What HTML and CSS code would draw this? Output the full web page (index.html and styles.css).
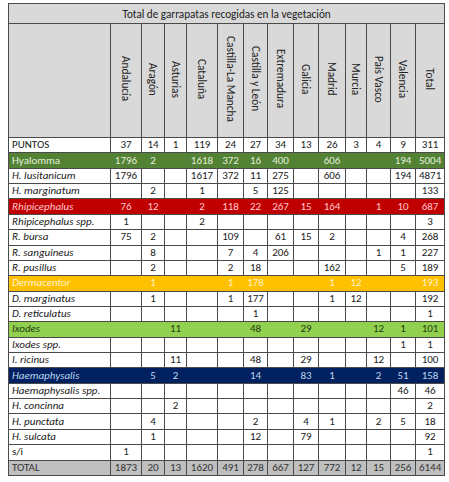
FILE: index.html
```html
<!DOCTYPE html>
<html lang="es">
<head>
<meta charset="utf-8">
<title>Total de garrapatas recogidas en la vegetación</title>
<link rel="stylesheet" href="styles.css">
</head>
<body>
<table class="ticks">
  <colgroup>
    <col class="c-label"><col class="c-and"><col class="c-ara"><col class="c-ast"><col class="c-cat"><col class="c-clm"><col class="c-cyl"><col class="c-ext"><col class="c-gal"><col class="c-mad"><col class="c-mur"><col class="c-pv"><col class="c-val"><col class="c-tot">
  </colgroup>
  <thead>
    <tr class="title-row"><th colspan="14">Total de garrapatas recogidas en la vegetación</th></tr>
    <tr class="head-row">
      <th></th>
      <th><span class="vt">Andalucía</span></th>
      <th><span class="vt">Aragón</span></th>
      <th><span class="vt">Asturias</span></th>
      <th><span class="vt">Cataluña</span></th>
      <th><span class="vt">Castilla-La Mancha</span></th>
      <th><span class="vt">Castilla y León</span></th>
      <th><span class="vt">Extremadura</span></th>
      <th><span class="vt">Galicia</span></th>
      <th><span class="vt">Madrid</span></th>
      <th><span class="vt">Murcia</span></th>
      <th><span class="vt">País Vasco</span></th>
      <th><span class="vt">Valencia</span></th>
      <th><span class="vt">Total</span></th>
    </tr>
  </thead>
  <tbody>
    <tr><td class="lbl">PUNTOS</td><td>37</td><td>14</td><td>1</td><td>119</td><td>24</td><td>27</td><td>34</td><td>13</td><td>26</td><td>3</td><td>4</td><td>9</td><td>311</td></tr>
    <tr class="g-hyal"><td class="lbl">Hyalomma</td><td>1796</td><td>2</td><td></td><td>1618</td><td>372</td><td>16</td><td>400</td><td></td><td>606</td><td></td><td></td><td>194</td><td>5004</td></tr>
    <tr><td class="lbl sp">H. lusitanicum</td><td>1796</td><td></td><td></td><td>1617</td><td>372</td><td>11</td><td>275</td><td></td><td>606</td><td></td><td></td><td>194</td><td>4871</td></tr>
    <tr><td class="lbl sp">H. marginatum</td><td></td><td>2</td><td></td><td>1</td><td></td><td>5</td><td>125</td><td></td><td></td><td></td><td></td><td></td><td>133</td></tr>
    <tr class="g-rhip"><td class="lbl sp">Rhipicephalus</td><td>76</td><td>12</td><td></td><td>2</td><td>118</td><td>22</td><td>267</td><td>15</td><td>164</td><td></td><td>1</td><td>10</td><td>687</td></tr>
    <tr><td class="lbl sp">Rhipicephalus spp.</td><td>1</td><td></td><td></td><td>2</td><td></td><td></td><td></td><td></td><td></td><td></td><td></td><td></td><td>3</td></tr>
    <tr><td class="lbl sp">R. bursa</td><td>75</td><td>2</td><td></td><td></td><td>109</td><td></td><td>61</td><td>15</td><td>2</td><td></td><td></td><td>4</td><td>268</td></tr>
    <tr><td class="lbl sp">R. sanguineus</td><td></td><td>8</td><td></td><td></td><td>7</td><td>4</td><td>206</td><td></td><td></td><td></td><td>1</td><td>1</td><td>227</td></tr>
    <tr><td class="lbl sp">R. pusillus</td><td></td><td>2</td><td></td><td></td><td>2</td><td>18</td><td></td><td></td><td>162</td><td></td><td></td><td>5</td><td>189</td></tr>
    <tr class="g-derm"><td class="lbl sp">Dermacentor</td><td></td><td>1</td><td></td><td></td><td>1</td><td>178</td><td></td><td></td><td>1</td><td>12</td><td></td><td></td><td>193</td></tr>
    <tr><td class="lbl sp">D. marginatus</td><td></td><td>1</td><td></td><td></td><td>1</td><td>177</td><td></td><td></td><td>1</td><td>12</td><td></td><td></td><td>192</td></tr>
    <tr><td class="lbl sp">D. reticulatus</td><td></td><td></td><td></td><td></td><td></td><td>1</td><td></td><td></td><td></td><td></td><td></td><td></td><td>1</td></tr>
    <tr class="g-ixod"><td class="lbl sp">Ixodes</td><td></td><td></td><td>11</td><td></td><td></td><td>48</td><td></td><td>29</td><td></td><td></td><td>12</td><td>1</td><td>101</td></tr>
    <tr><td class="lbl sp">Ixodes spp.</td><td></td><td></td><td></td><td></td><td></td><td></td><td></td><td></td><td></td><td></td><td></td><td>1</td><td>1</td></tr>
    <tr><td class="lbl sp">I. ricinus</td><td></td><td></td><td>11</td><td></td><td></td><td>48</td><td></td><td>29</td><td></td><td></td><td>12</td><td></td><td>100</td></tr>
    <tr class="g-haem"><td class="lbl sp">Haemaphysalis</td><td></td><td>5</td><td>2</td><td></td><td></td><td>14</td><td></td><td>83</td><td>1</td><td></td><td>2</td><td>51</td><td>158</td></tr>
    <tr><td class="lbl sp">Haemaphysalis spp.</td><td></td><td></td><td></td><td></td><td></td><td></td><td></td><td></td><td></td><td></td><td></td><td>46</td><td>46</td></tr>
    <tr><td class="lbl sp">H. concinna</td><td></td><td></td><td>2</td><td></td><td></td><td></td><td></td><td></td><td></td><td></td><td></td><td></td><td>2</td></tr>
    <tr><td class="lbl sp">H. punctata</td><td></td><td>4</td><td></td><td></td><td></td><td>2</td><td></td><td>4</td><td>1</td><td></td><td>2</td><td>5</td><td>18</td></tr>
    <tr><td class="lbl sp">H. sulcata</td><td></td><td>1</td><td></td><td></td><td></td><td>12</td><td></td><td>79</td><td></td><td></td><td></td><td></td><td>92</td></tr>
    <tr><td class="lbl">s/i</td><td>1</td><td></td><td></td><td></td><td></td><td></td><td></td><td></td><td></td><td></td><td></td><td></td><td>1</td></tr>
    <tr class="total-row"><td class="lbl">TOTAL</td><td>1873</td><td>20</td><td>13</td><td>1620</td><td>491</td><td>278</td><td>667</td><td>127</td><td>772</td><td>12</td><td>15</td><td>256</td><td>6144</td></tr>
  </tbody>
</table>
</body>
</html>
```
FILE: styles.css
```css
html, body {
  margin: 0;
  padding: 0;
  background: #ffffff;
}

body {
  padding: 3px 0 0 8px;
  font-family: Carlito, Lato, "Liberation Sans", sans-serif;
  font-size: 11px;
  color: #1a1a1a;
}

.ticks {
  border-collapse: collapse;
  table-layout: fixed;
  width: 436px;
}

.c-label { width: 102px; }
.c-and { width: 31px; }
.c-ara { width: 23px; }
.c-ast { width: 22px; }
.c-cat { width: 31px; }
.c-clm { width: 26px; }
.c-cyl { width: 24px; }
.c-ext { width: 26px; }
.c-gal { width: 25px; }
.c-mad { width: 27px; }
.c-mur { width: 21px; }
.c-pv { width: 24px; }
.c-val { width: 25px; }
.c-tot { width: 29px; }

.ticks th,
.ticks td {
  border: 1px solid #4a4a4a;
  padding: 0;
  text-align: center;
  vertical-align: middle;
  font-weight: normal;
  line-height: 12px;
  white-space: nowrap;
  overflow: hidden;
}

.title-row th {
  height: 19px;
  background: #d9d9d9;
  font-size: 11.2px;
  color: #222;
}

.head-row th {
  height: 113px;
  background: #d9d9d9;
}

.vt {
  writing-mode: vertical-rl;
  display: inline-block;
  font-size: 11.3px;
  color: #222;
}

.ticks tbody td {
  height: 14.36px;
}

.ticks td.lbl {
  text-align: left;
  padding-left: 3px;
}

.ticks td.sp {
  font-style: italic;
}

.g-hyal td { background: #548235; color: #e2efda; border-left-color: #548235; border-right-color: #548235; }
.g-rhip td { background: #c00000; color: #ffc7ce; border-left-color: #c00000; border-right-color: #c00000; }
.g-derm td { background: #ffc000; color: #fff2cc; border-left-color: #ffc000; border-right-color: #ffc000; }
.g-ixod td { background: #92d050; color: #1e3d10; border-left-color: #92d050; border-right-color: #92d050; }
.g-haem td { background: #002060; color: #bdd7ee; border-left-color: #002060; border-right-color: #002060; }

.ticks tr td:first-child { border-left-color: #4a4a4a; }
.ticks tr td:last-child { border-right-color: #4a4a4a; }

.total-row td {
  background: #bfbfbf;
  color: #333;
}
```
